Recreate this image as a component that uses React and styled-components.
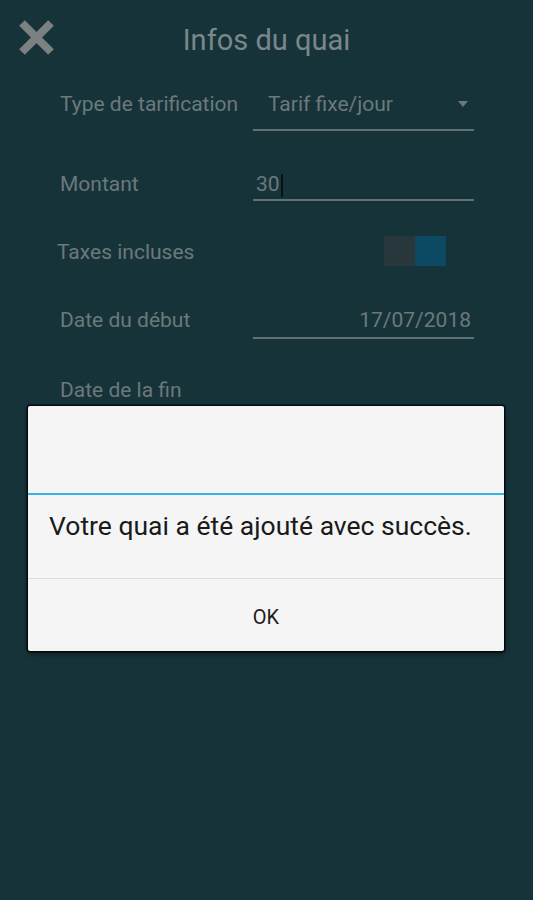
import React from "react";
import styled, { createGlobalStyle } from "styled-components";

const Global = createGlobalStyle`
  html, body { margin: 0; padding: 0; background: #17333a; }
  body { font-family: Roboto, "Noto Sans", "Liberation Sans", sans-serif; }
  #root { min-height: 900px; }
`;

const Screen = styled.div`
  position: relative;
  width: 533px;
  height: 900px;
  background: #17333a;
  overflow: hidden;
`;

const Header = styled.header`
  display: grid;
  grid-template-columns: 1fr auto 1fr;
  align-items: start;
  height: 92px;
  box-sizing: border-box;
  padding: 17px 16px 0;
`;

const CloseButton = styled.div`
  width: 41px;
  height: 41px;
  justify-self: start;
`;

const Title = styled.h1`
  margin: 6px 0 0;
  font-size: 29px;
  line-height: 34px;
  font-weight: 400;
  color: #7a8789;
`;

const Form = styled.div`
  display: flex;
  flex-direction: column;
  padding-left: 60px;
`;

const Row = styled.div`
  display: flex;
  align-items: flex-start;
  height: ${(p) => p.$h}px;
`;

const Label = styled.div`
  width: 193px;
  margin-left: ${(p) => p.$shift || 0}px;
  font-size: 21px;
  line-height: 24px;
  color: #6b797b;
  white-space: nowrap;
`;

const Field = styled.div`
  display: flex;
  align-items: center;
  justify-content: ${(p) => (p.$right ? "flex-end" : "space-between")};
  width: 221px;
  box-sizing: border-box;
  padding: 0 ${(p) => p.$pr || 0}px ${(p) => p.$pb}px ${(p) => p.$pl || 0}px;
  border-bottom: 2px solid #627274;
  font-size: 21px;
  line-height: 24px;
  color: #6b797b;
`;

const Caret = styled.span`
  display: inline-block;
  width: 2px;
  height: 23px;
  margin-left: 1px;
  background: #0b0f10;
  vertical-align: middle;
`;

const Arrow = styled.span`
  width: 0;
  height: 0;
  border-left: 5px solid transparent;
  border-right: 5px solid transparent;
  border-top: 6px solid #6b797b;
`;

const Toggle = styled.div`
  display: flex;
  margin: -4px 0 0 ${(p) => p.$offset}px;
  width: 62px;
  height: 30px;
`;

const ToggleHalf = styled.div`
  flex: 1;
  background: ${(p) => p.$c};
`;

const Dialog = styled.div`
  position: absolute;
  left: 28px;
  top: 406px;
  width: 476px;
  height: 245px;
  display: flex;
  flex-direction: column;
  background: #f5f5f5;
  border-radius: 2px;
  box-shadow: 0 0 0 1.5px rgba(0, 0, 0, 0.75), 0 3px 6px rgba(0, 0, 0, 0.45);
`;

const DialogTitle = styled.div`
  height: 87px;
  border-bottom: 2px solid #33b5e5;
`;

const Message = styled.div`
  height: 84px;
  box-sizing: border-box;
  padding: 16px 0 0 21px;
  font-size: 26.5px;
  line-height: 30px;
  color: #1a1a1a;
  border-bottom: 1px solid #dcdcdc;
  white-space: nowrap;
`;

const OkButton = styled.div`
  flex: 1;
  display: flex;
  justify-content: center;
  padding-top: 26px;
  font-size: 20px;
  line-height: 24px;
  color: #1e1e1e;
`;

export default function App() {
  return (
    <Screen>
      <Global />
      <Header>
        <CloseButton>
          <svg width="41" height="41" viewBox="0 0 41 41">
            <path d="M6 6 L35 35 M35 6 L6 35" stroke="#7b8080" strokeWidth="8" />
          </svg>
        </CloseButton>
        <Title>Infos du quai</Title>
      </Header>
      <Form>
        <Row $h={80}>
          <Label>Type de tarification</Label>
          <Field $pb={13} $pl={15} $pr={6}>
            <span>Tarif fixe/jour</span>
            <Arrow />
          </Field>
        </Row>
        <Row $h={68}>
          <Label>Montant</Label>
          <Field $pb={2} $pl={3}>
            <span>
              30
              <Caret />
            </span>
          </Field>
        </Row>
        <Row $h={68}>
          <Label $shift={-3}>Taxes incluses</Label>
          <Toggle $offset={134}>
            <ToggleHalf $c="#27373c" />
            <ToggleHalf $c="#0b4a62" />
          </Toggle>
        </Row>
        <Row $h={70}>
          <Label>Date du début</Label>
          <Field $pb={5} $pr={3} $right>
            <span>17/07/2018</span>
          </Field>
        </Row>
        <Row $h={40}>
          <Label>Date de la fin</Label>
        </Row>
      </Form>
      <Dialog>
        <DialogTitle />
        <Message>Votre quai a été ajouté avec succès.</Message>
        <OkButton>OK</OkButton>
      </Dialog>
    </Screen>
  );
}
